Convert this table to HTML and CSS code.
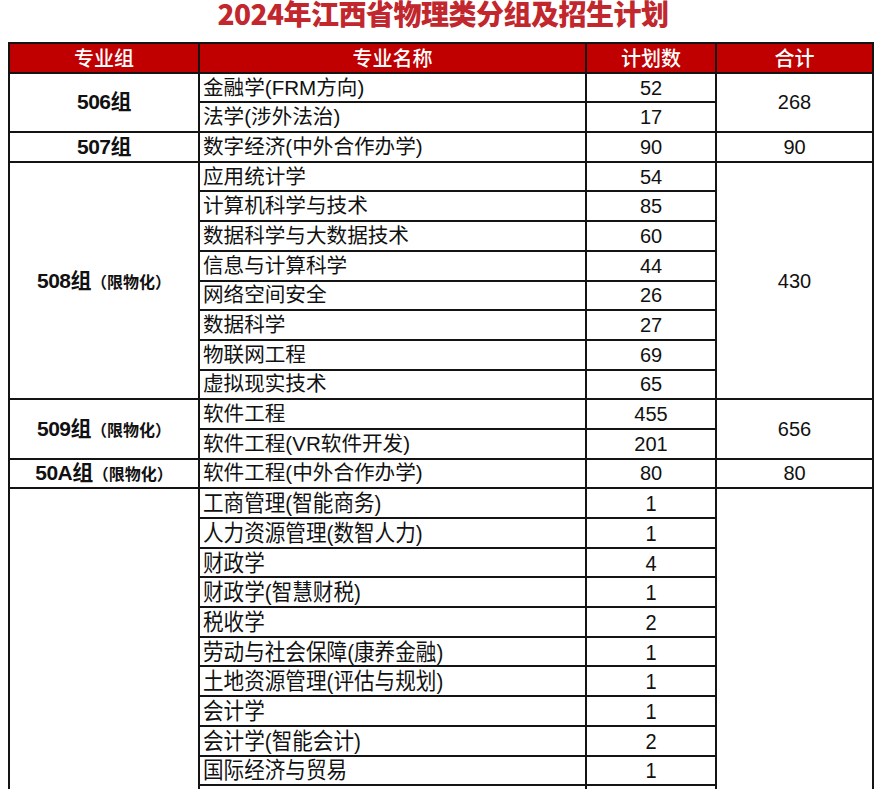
FILE: index.html
```html
<!DOCTYPE html>
<html lang="zh">
<head>
<meta charset="utf-8">
<link rel="stylesheet" href="styles.css">
</head>
<body>
<div class="page">
  <h1 class="title">2024年江西省物理类分组及招生计划</h1>
  <table class="plan">
    <colgroup>
      <col class="c1"><col class="c2"><col class="c3"><col class="c4">
    </colgroup>
    <thead>
      <tr><th>专业组</th><th>专业名称</th><th>计划数</th><th>合计</th></tr>
    </thead>
    <tbody>
      <tr><td class="grp" rowspan="2">506组</td><td class="name">金融学(FRM方向)</td><td class="num">52</td><td class="num" rowspan="2">268</td></tr>
      <tr><td class="name">法学(涉外法治)</td><td class="num">17</td></tr>
      <tr><td class="grp">507组</td><td class="name">数字经济(中外合作办学)</td><td class="num">90</td><td class="num">90</td></tr>
      <tr><td class="grp" rowspan="8">508组<span class="lim">（限物化）</span></td><td class="name">应用统计学</td><td class="num">54</td><td class="num" rowspan="8">430</td></tr>
      <tr><td class="name">计算机科学与技术</td><td class="num">85</td></tr>
      <tr><td class="name">数据科学与大数据技术</td><td class="num">60</td></tr>
      <tr><td class="name">信息与计算科学</td><td class="num">44</td></tr>
      <tr><td class="name">网络空间安全</td><td class="num">26</td></tr>
      <tr><td class="name">数据科学</td><td class="num">27</td></tr>
      <tr><td class="name">物联网工程</td><td class="num">69</td></tr>
      <tr><td class="name">虚拟现实技术</td><td class="num">65</td></tr>
      <tr><td class="grp" rowspan="2">509组<span class="lim">（限物化）</span></td><td class="name">软件工程</td><td class="num">455</td><td class="num" rowspan="2">656</td></tr>
      <tr><td class="name">软件工程(VR软件开发)</td><td class="num">201</td></tr>
      <tr><td class="grp">50A组<span class="lim">（限物化）</span></td><td class="name">软件工程(中外合作办学)</td><td class="num">80</td><td class="num">80</td></tr>
      <tr class="tall"><td class="grp" rowspan="12"></td><td class="name"><span>工商管理(智能商务)</span></td><td class="num"><span>1</span></td><td class="num" rowspan="12"></td></tr>
      <tr class="tall"><td class="name"><span>人力资源管理(数智人力)</span></td><td class="num"><span>1</span></td></tr>
      <tr class="tall"><td class="name"><span>财政学</span></td><td class="num"><span>4</span></td></tr>
      <tr class="tall"><td class="name"><span>财政学(智慧财税)</span></td><td class="num"><span>1</span></td></tr>
      <tr class="tall"><td class="name"><span>税收学</span></td><td class="num"><span>2</span></td></tr>
      <tr class="tall"><td class="name"><span>劳动与社会保障(康养金融)</span></td><td class="num"><span>1</span></td></tr>
      <tr class="tall"><td class="name"><span>土地资源管理(评估与规划)</span></td><td class="num"><span>1</span></td></tr>
      <tr class="tall"><td class="name"><span>会计学</span></td><td class="num"><span>1</span></td></tr>
      <tr class="tall"><td class="name"><span>会计学(智能会计)</span></td><td class="num"><span>2</span></td></tr>
      <tr class="tall"><td class="name"><span>国际经济与贸易</span></td><td class="num"><span>1</span></td></tr>
      <tr class="tall"><td class="name"></td><td class="num"></td></tr>
      <tr class="tall"><td class="name"></td><td class="num"></td></tr>
    </tbody>
  </table>
</div>
</body>
</html>
```
FILE: styles.css
```css
html, body {
  margin: 0;
  padding: 0;
  background: #ffffff;
}
body {
  font-family: "Noto Sans CJK SC", "Liberation Sans", sans-serif;
  color: #111;
  overflow: hidden;
}
.page {
  width: 876px;
  padding-left: 8px;
  box-sizing: border-box;
}
.title {
  margin: 0;
  height: 40px;
  margin-top: -3px;
  margin-bottom: 5px;
  font-size: 28px;
  line-height: 32px;
  font-weight: 900;
  color: #c1272d;
  text-align: center;
  padding-left: 2px;
  letter-spacing: -0.5px;
  font-family: "Noto Sans CJK SC", sans-serif;
}
.plan {
  border-collapse: collapse;
  table-layout: fixed;
  width: 864px;
}
.c1 { width: 190px; }
.c2 { width: 387px; }
.c3 { width: 130px; }
.c4 { width: 157px; }
.plan th, .plan td {
  border: 2px solid #141414;
  padding: 0;
  height: 27.7px;
  font-size: 20.6px;
  line-height: 26px;
  overflow: hidden;
  white-space: nowrap;
}
.plan th {
  background: #c00000;
  color: #ffffff;
  font-weight: 500;
  text-align: center;
  font-size: 20px;
}
.grp {
  text-align: center;
  font-weight: 700;
  font-family: "Liberation Sans", "Noto Sans CJK SC", sans-serif;
  font-size: 21px !important;
  letter-spacing: -0.5px;
}
.grp .lim {
  font-family: "Noto Sans CJK SC", sans-serif;
  font-size: 16px;
  font-weight: 700;
  letter-spacing: 0;
}
.name {
  text-align: left;
  padding-left: 3px !important;
  font-family: "Liberation Sans", "Noto Sans CJK SC", sans-serif;
  font-weight: 400;
}
.num {
  text-align: center;
  font-family: "Liberation Sans", sans-serif;
  font-size: 20px !important;
}
.tall span {
  display: inline-block;
  transform: scaleY(1.1);
}
.tall .name span {
  transform-origin: left center;
}
```
